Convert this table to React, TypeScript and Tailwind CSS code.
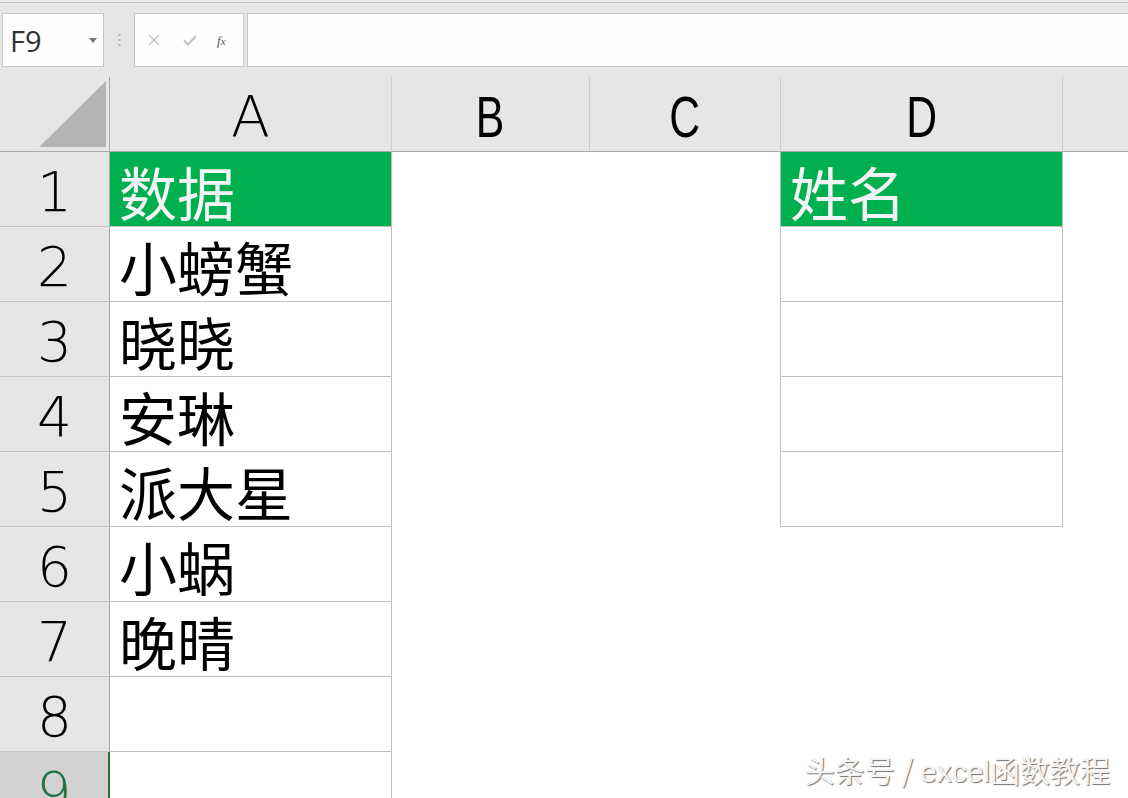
import React from "react";

const colA = ["数据", "小螃蟹", "晓晓", "安琳", "派大星", "小蜗", "晚晴", "", ""];
const colD = ["姓名", "", "", "", ""];

const cjk = "font-['Noto_Sans_CJK_SC','Noto_Sans',sans-serif]";
const digits = "font-['DejaVu_Sans','Liberation_Sans',sans-serif] font-extralight";

function TopBar() {
  return (
    <div className="shrink-0 bg-[#e6e6e6]">
      <div className="h-[2px] bg-[#ededed]" />
      <div className="flex h-[65px] items-end border-t border-[#c6c6c6]">
        <div className="ml-[2px] flex h-[54px] w-[102px] items-center justify-between border border-[#c6c6c6] bg-[#fdfdfd] pl-[7px] pr-[6px]">
          <span className="font-['Open_Sans','Liberation_Sans',sans-serif] text-[29px] leading-none text-[#333]">
            F9
          </span>
          <svg width="8" height="5" viewBox="0 0 8 5">
            <path d="M0 0h8L4 5z" fill="#777" />
          </svg>
        </div>
        <div className="flex h-[54px] w-[30px] items-center justify-center">
          <svg width="3" height="12" viewBox="0 0 3 12">
            <rect x="0.5" y="0" width="2" height="2" fill="#b0b0b0" />
            <rect x="0.5" y="5" width="2" height="2" fill="#b0b0b0" />
            <rect x="0.5" y="10" width="2" height="2" fill="#b0b0b0" />
          </svg>
        </div>
        <div className="flex h-[54px] w-[110px] items-center border border-[#c6c6c6] bg-[#fdfdfd] pl-[12px]">
          <svg width="12" height="12" viewBox="0 0 12 12" className="ml-[1px]">
            <path d="M1 1l10 10M11 1L1 11" stroke="#c2c2c2" strokeWidth="1.4" />
          </svg>
          <svg width="14" height="11" viewBox="0 0 14 11" className="ml-[23px]">
            <path d="M1 5.5l4 4L13 1" stroke="#c2c2c2" strokeWidth="2" fill="none" />
          </svg>
          <span className="ml-[20px] font-['Liberation_Serif',serif] text-[13px] italic leading-none text-[#555]">
            f<span className="text-[11px]">x</span>
          </span>
        </div>
        <div className="ml-[3px] h-[54px] flex-1 border-y border-l border-[#c6c6c6] bg-[#fdfdfd]" />
      </div>
    </div>
  );
}

function HeaderRow() {
  const cols = [
    { label: "B", w: "w-[198px]" },
    { label: "C", w: "w-[191px]" },
    { label: "D", w: "w-[282px]" },
  ];
  return (
    <div className="flex h-[85px] shrink-0 items-end bg-[#e6e6e6]">
      <div className="h-[75px] w-[110px] border-r border-b border-[#ababab]">
        <svg width="109" height="74" viewBox="0 0 109 74">
          <polygon points="39,70 106,4 106,70" fill="#b4b4b4" />
        </svg>
      </div>
      <div className="flex h-[75px] w-[282px] items-center justify-center border-r border-b border-r-[#cdcdcd] border-b-[#ababab] pt-[6px]">
        <span className={`${digits} text-[57px] leading-none text-black`}>A</span>
      </div>
      {cols.map((c) => (
        <div
          key={c.label}
          className={`flex h-[75px] ${c.w} items-center justify-center border-r border-b border-r-[#cdcdcd] border-b-[#ababab] pt-[6px]`}
        >
          <span className="inline-block scale-x-75 font-['Liberation_Sans',sans-serif] text-[57px] leading-none text-black">
            {c.label}
          </span>
        </div>
      ))}
      <div className="h-[75px] flex-1 border-b border-[#ababab]" />
    </div>
  );
}

function DataRow({ n, a, d }: { n: number; a: string; d?: string }) {
  const selected = n === 9;
  const header = n === 1;
  return (
    <div className="flex h-[75px] shrink-0">
      <div
        className={`flex w-[110px] items-center justify-center border-b border-b-[#c4c4c4] ${
          selected
            ? "border-r-2 border-r-[#217346] bg-[#d2d2d2]"
            : "border-r border-r-[#ababab] bg-[#e6e6e6]"
        }`}
      >
        <span
          className={`${digits} pt-[6px] text-[55px] leading-none ${
            selected ? "text-[#217346]" : "text-black"
          }`}
        >
          {n}
        </span>
      </div>
      <div
        className={`flex w-[282px] items-end border-r border-b border-[#bfbfbf] pb-[3px] pl-[9px] ${
          header ? "bg-[#00b050] text-[#f4f4f4]" : "bg-white text-black"
        }`}
      >
        <span className={`${cjk} block text-[58px] leading-[64px]`}>{a}</span>
      </div>
      <div className="w-[388px] bg-white" />
      {d !== undefined ? (
        <div
          className={`flex w-[283px] items-end border-x border-b border-[#bfbfbf] pb-[3px] pl-[9px] ${
            header ? "bg-[#00b050] text-[#f4f4f4]" : "bg-white"
          }`}
        >
          <span className={`${cjk} block text-[58px] leading-[64px]`}>{d}</span>
        </div>
      ) : (
        <div className="w-[283px] bg-white" />
      )}
      <div className="flex-1 bg-white" />
    </div>
  );
}

export default function App() {
  return (
    <div className="relative flex h-[798px] w-[1128px] flex-col overflow-hidden bg-white">
      <TopBar />
      <HeaderRow />
      {colA.map((a, i) => (
        <DataRow key={i} n={i + 1} a={a} d={colD[i]} />
      ))}

      <div className="absolute right-[18px] bottom-[11px] font-['Noto_Sans_CJK_SC','Liberation_Sans',sans-serif] text-[30px] leading-none text-[#f3f3f3] [text-shadow:1px_1px_1px_rgba(0,0,0,0.55)]">
        头条号 / <span className="font-['Liberation_Sans',sans-serif]">excel</span>函数教程
      </div>
    </div>
  );
}
